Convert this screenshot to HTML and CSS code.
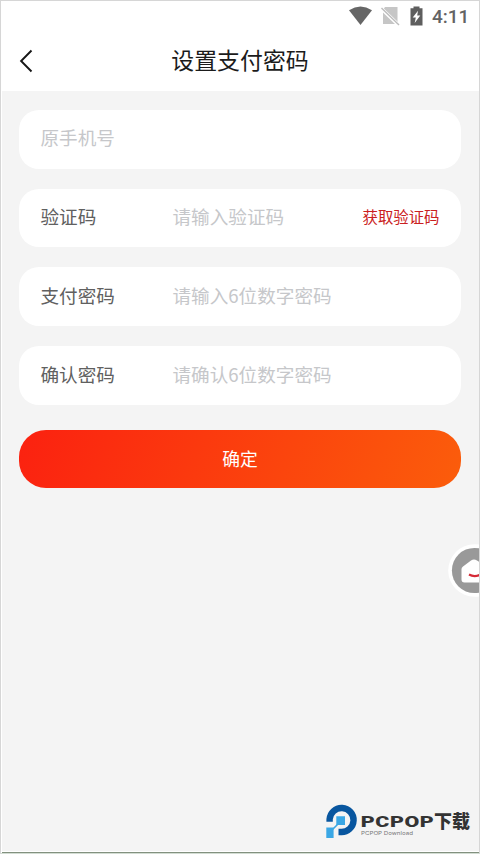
FILE: index.html
```html
<!DOCTYPE html>
<html lang="zh-CN">
<head>
<meta charset="utf-8">
<meta name="viewport" content="width=device-width, initial-scale=1">
<title>设置支付密码</title>
<link rel="stylesheet" href="styles.css">
</head>
<body>
<div class="screen">
  <div class="statusbar">
    <svg class="status-icons" width="76" height="22" viewBox="0 0 76 22">
      <path d="M0 4.2Q11.5-3.2 23 4.2L11.5 19Z" fill="#666"/>
      <path d="M36 1H48.5V18H34V4Z" fill="#c6c6c6"/>
      <path d="M31 1.2L49.5 19" stroke="#fff" stroke-width="3.5"/>
      <path d="M32.5 2L50 19" stroke="#bcbcbc" stroke-width="1.4"/>
      <path d="M61.5 2.3H64.5V.5H70.5V2.3H73.5V19.5H61.5Z" fill="#5e5e5e"/>
      <path d="M69 4.8L63.7 11.5H66.8L65.7 17L71.3 9.6H68.2Z" fill="#fff"/>
    </svg>
    <span class="clock">4:11</span>
  </div>
  <header class="navbar">
    <svg class="back" width="14" height="24" viewBox="0 0 14 24"><path d="M12.5 1.5L2.1 12L12.5 22.5" fill="none" stroke="#161616" stroke-width="1.9"/></svg>
    <h1>设置支付密码</h1>
  </header>
  <main class="form">
    <div class="field"><span class="hint">原手机号</span></div>
    <div class="field"><span class="label">验证码</span><span class="hint">请输入验证码</span><span class="code">获取验证码</span></div>
    <div class="field"><span class="label">支付密码</span><span class="hint">请输入6位数字密码</span></div>
    <div class="field"><span class="label">确认密码</span><span class="hint">请确认6位数字密码</span></div>
    <div class="submit">确定</div>
  </main>
  <div class="floating">
    <svg width="32" height="54" viewBox="0 0 32 54">
      <circle cx="27.5" cy="27.5" r="26.3" fill="#fff"/>
      <circle cx="27.5" cy="27.5" r="22.6" fill="#999"/>
      <path d="M14.5 26Q14.5 24.5 16 23.5L24 17.5Q27 15.3 30 17.5L40 24V39.5H17.5Q14.5 39.5 14.5 36.5Z" fill="#fff"/>
      <path d="M22 31.5Q27.5 34.7 33.5 31.5" fill="none" stroke="#d52a36" stroke-width="2.2"/>
    </svg>
  </div>
  <div class="brand">
    <svg width="150" height="40" viewBox="0 0 150 40">
      <path d="M4.6 20.7V18.3A12 12 0 1 1 16 31H13.5" fill="none" stroke="#08569f" stroke-width="6.4"/>
      <path d="M7.5 28.5L15 21" stroke="#3aa7e5" stroke-width="1.6"/>
      <path d="M11.3 15.3H20V24H11.3ZM1.3 26.6H8.6V37H1.3Z" fill="#3aa7e5"/>
      <text class="brand-name" x="35.8" y="26" textLength="73.5" lengthAdjust="spacingAndGlyphs">PCPOP</text>
      <text class="brand-cn" x="109" y="26.8" textLength="36" lengthAdjust="spacingAndGlyphs">下载</text>
      <text class="brand-sub" x="36" y="33.8" textLength="52" lengthAdjust="spacingAndGlyphs">PCPOP Download</text>
    </svg>
  </div>
</div>
</body>
</html>
```
FILE: styles.css
```css
* { box-sizing: border-box; }
body {
  margin: 0;
  font-family: "Noto Sans CJK SC", sans-serif;
}
.screen {
  position: relative;
  height: 854px;
  background: #f4f4f4;
  border: 1px solid #d6d6d6;
  border-bottom-color: #d3ddd3;
  box-shadow: inset 1px 0 #fff, inset 0 -1px #82917f, inset 0 -2px #fff;
  overflow: hidden;
}
.statusbar {
  height: 30px;
  padding: 5px 11px 0 0;
  display: flex;
  justify-content: flex-end;
  gap: 7px;
  background: #fff;
}
.clock {
  width: 36px;
  font: 500 19px/22px Roboto, sans-serif;
  color: #636363;
  white-space: nowrap;
}
.navbar {
  height: 60px;
  display: grid;
  grid-template-columns: 60px 1fr 60px;
  align-items: center;
  background: #fff;
}
.back { margin-left: 18px; }
h1 {
  margin: 0 0 4px;
  text-align: center;
  font-size: 22.9px;
  line-height: 34px;
  font-weight: 400;
  color: #1b1b1b;
}
.form {
  padding: 19px 18px 0;
  display: flex;
  flex-direction: column;
  gap: 20.2px;
}
.field {
  height: 58.5px;
  padding: 0 21.5px 3.6px;
  display: flex;
  align-items: center;
  border-radius: 20px;
  background: #fff;
  font-size: 18.6px;
  line-height: 28px;
  white-space: nowrap;
}
.label { width: 132px; color: #606060; }
.hint { color: #c6c7ca; }
.code { margin-left: auto; font-size: 15.4px; color: #ca2020; }
.submit {
  height: 57.5px;
  margin-top: 5.5px;
  padding-bottom: 2px;
  display: flex;
  align-items: center;
  justify-content: center;
  border-radius: 27px;
  background: linear-gradient(110deg, #fb2110, #fb5d0b);
  color: #fff;
  font-size: 17.8px;
}
.floating { position: absolute; right: 0; top: 542px; height: 54px; width: 32px; }
.floating svg { display: block; }
.brand { position: absolute; left: 324px; top: 800px; }
.brand svg { display: block; }
.brand-name { font: 900 15.5px Roboto, sans-serif; letter-spacing: 0.4px; fill: #333; }
.brand-cn { font: 900 18px "Noto Sans CJK SC", sans-serif; fill: #333; }
.brand-sub { font: 400 5px Inter, sans-serif; fill: #777; }
```
